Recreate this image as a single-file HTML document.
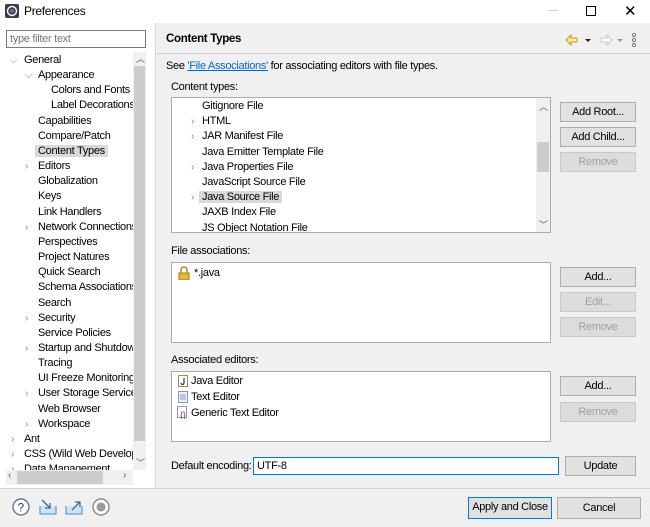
<!DOCTYPE html>
<html><head><style>
*{margin:0;padding:0;box-sizing:border-box}
body{width:650px;height:527px;position:relative;overflow:hidden;background:#f0f0f0;font-family:"Liberation Sans","Noto Sans CJK KR",sans-serif;font-size:11px;color:#000;letter-spacing:-0.3px}
.a{position:absolute;white-space:nowrap}
.box{position:absolute;background:#fff;border:1px solid #adadad}
.btn{position:absolute;background:#e1e1e1;border:1px solid #adadad;text-align:center;line-height:18px;font-size:11px}
.dis{color:#a0a0a0;background:#dcdcdc;border-color:#c8c8c8}
.chev{position:absolute;color:#888;font-size:10px}
</style></head><body>
<div class="a" style="left:0;top:0;width:650px;height:23px;background:#fff"></div>
<svg class="a" style="left:5px;top:4px" width="14" height="14"><rect x="0" y="0" width="14" height="14" rx="2" fill="#3b3b55"/><circle cx="7" cy="7" r="4.5" fill="none" stroke="#fff" stroke-width="1.4"/><circle cx="7" cy="7" r="2" fill="#6a6aa0"/></svg>
<div class="a" style="left:24px;top:4px;font-size:12px">Preferences</div>
<div class="a" style="left:548px;top:10px;width:10px;height:1px;background:#ccc"></div>
<div class="a" style="left:586px;top:6px;width:10px;height:10px;border:1px solid #000"></div>
<div class="a" style="left:624px;top:2px;font-size:15px">✕</div>
<!-- left panel -->
<div class="a" style="left:0;top:23px;width:155px;height:465px;background:#fff"></div>
<div class="a" style="left:155px;top:23px;width:1px;height:465px;background:#d8d8d8"></div>
<div class="a" style="left:6px;top:30px;width:140px;height:18px;border:1px solid #7a7a7a;background:#fff;color:#777;padding:2px 3px;font-size:11px">type filter text</div>
<div class="a" style="left:133px;top:52px;width:13px;height:418px;background:#f0f0f0"></div>
<div class="a" style="left:134px;top:66px;width:11px;height:375px;background:#cdcdcd"></div>
<div class="a" style="left:136px;top:52px;font-size:9px;color:#555">︿</div>
<div class="a" style="left:136px;top:456px;font-size:9px;color:#555">﹀</div>
<div class="a" style="left:6px;top:470px;width:127px;height:15px;background:#f0f0f0"></div>
<div class="a" style="left:17px;top:471px;width:86px;height:13px;background:#cdcdcd"></div>
<div class="a" style="left:8px;top:470px;font-size:10px;color:#555">‹</div>
<div class="a" style="left:123px;top:470px;font-size:10px;color:#555">›</div>
<div class="a" style="left:0;top:53px;width:133px;height:417px;overflow:hidden;line-height:15.15px;font-size:11px">
<div style="padding-left:24px"><span class="chev" style="left:10px">⌵</span>General</div>
<div style="padding-left:38px"><span class="chev" style="left:25px">⌵</span>Appearance</div>
<div style="padding-left:51px">Colors and Fonts</div>
<div style="padding-left:51px">Label Decorations</div>
<div style="padding-left:38px">Capabilities</div>
<div style="padding-left:38px">Compare/Patch</div>
<div style="padding-left:38px"><span style="background:#d9d9d9;padding:0 3px;margin-left:-3px">Content Types</span></div>
<div style="padding-left:38px"><span class="chev" style="left:25px">›</span>Editors</div>
<div style="padding-left:38px">Globalization</div>
<div style="padding-left:38px">Keys</div>
<div style="padding-left:38px">Link Handlers</div>
<div style="padding-left:38px"><span class="chev" style="left:25px">›</span>Network Connections</div>
<div style="padding-left:38px">Perspectives</div>
<div style="padding-left:38px">Project Natures</div>
<div style="padding-left:38px">Quick Search</div>
<div style="padding-left:38px">Schema Associations</div>
<div style="padding-left:38px">Search</div>
<div style="padding-left:38px"><span class="chev" style="left:25px">›</span>Security</div>
<div style="padding-left:38px">Service Policies</div>
<div style="padding-left:38px"><span class="chev" style="left:25px">›</span>Startup and Shutdown</div>
<div style="padding-left:38px">Tracing</div>
<div style="padding-left:38px">UI Freeze Monitoring</div>
<div style="padding-left:38px"><span class="chev" style="left:25px">›</span>User Storage Service</div>
<div style="padding-left:38px">Web Browser</div>
<div style="padding-left:38px"><span class="chev" style="left:25px">›</span>Workspace</div>
<div style="padding-left:24px"><span class="chev" style="left:11px">›</span>Ant</div>
<div style="padding-left:24px"><span class="chev" style="left:11px">›</span>CSS (Wild Web Developer)</div>
<div style="padding-left:24px"><span class="chev" style="left:11px">›</span>Data Management</div>
</div>
<!-- right header -->
<div class="a" style="left:166px;top:33px;font-weight:bold;font-size:11.5px">Content Types</div>
<div class="a" style="left:157px;top:53px;width:493px;height:1px;background:#d0d0d0"></div>
<svg class="a" style="left:565px;top:33px" width="60" height="14"><path d="M1 7 L6 2 V5 H12 V9 H6 V12 Z" fill="#fde9a8" stroke="#c9961f"/><path d="M20 6 h6 l-3 3z" fill="#222"/><path d="M47 7 L42 2 V5 H36 V9 H42 V12 Z" fill="#fafafa" stroke="#c8c8c8"/><path d="M52 6 h6 l-3 3z" fill="#999"/></svg>
<svg class="a" style="left:631px;top:33px" width="6" height="14"><circle cx="3" cy="2" r="1.6" fill="none" stroke="#777"/><circle cx="3" cy="7" r="1.6" fill="none" stroke="#777"/><circle cx="3" cy="12" r="1.6" fill="none" stroke="#777"/></svg>
<div class="a" style="left:166px;top:60px">See <span style="color:#0066cc;text-decoration:underline">'File Associations'</span> for associating editors with file types.</div>
<div class="a" style="left:171px;top:81px">Content types:</div>
<div class="box" style="left:171px;top:97px;width:380px;height:136px;overflow:hidden">
<div class="a" style="left:364px;top:0;width:14px;height:134px;background:#f0f0f0"></div>
<div class="a" style="left:365px;top:44px;width:12px;height:30px;background:#cdcdcd"></div>
<div class="a" style="left:367px;top:2px;font-size:9px;color:#555">︿</div>
<div class="a" style="left:367px;top:120px;font-size:9px;color:#555">﹀</div>
<div class="a" style="left:0;top:1px;line-height:15.2px;width:360px">
<div style="padding-left:30px">Gitignore File</div>
<div style="padding-left:30px"><span class="chev" style="left:19px">›</span>HTML</div>
<div style="padding-left:30px"><span class="chev" style="left:19px">›</span>JAR Manifest File</div>
<div style="padding-left:30px">Java Emitter Template File</div>
<div style="padding-left:30px"><span class="chev" style="left:19px">›</span>Java Properties File</div>
<div style="padding-left:30px">JavaScript Source File</div>
<div style="padding-left:30px"><span class="chev" style="left:19px">›</span><span style="background:#d9d9d9;padding:0 3px;margin-left:-3px">Java Source File</span></div>
<div style="padding-left:30px">JAXB Index File</div>
<div style="padding-left:30px">JS Object Notation File</div>
</div></div>
<div class="btn" style="left:560px;top:102px;width:76px;height:20px">Add Root...</div>
<div class="btn" style="left:560px;top:127px;width:76px;height:20px">Add Child...</div>
<div class="btn dis" style="left:560px;top:152px;width:76px;height:20px">Remove</div>
<div class="a" style="left:171px;top:245px">File associations:</div>
<div class="box" style="left:171px;top:262px;width:380px;height:81px">
<svg class="a" style="left:6px;top:3px" width="12" height="14"><path d="M3 7 V4 a3 3 0 0 1 6 0 V7" fill="none" stroke="#b08a2a" stroke-width="1.5"/><rect x="1" y="7" width="10" height="7" fill="#e8b73a" stroke="#a07a1a"/></svg>
<div class="a" style="left:22px;top:4px">*.java</div></div>
<div class="btn" style="left:560px;top:267px;width:76px;height:20px">Add...</div>
<div class="btn dis" style="left:560px;top:292px;width:76px;height:20px">Edit...</div>
<div class="btn dis" style="left:560px;top:317px;width:76px;height:20px">Remove</div>
<div class="a" style="left:171px;top:354px">Associated editors:</div>
<div class="box" style="left:171px;top:371px;width:380px;height:71px">
<svg class="a" style="left:6px;top:3px" width="10" height="12"><rect x="0.5" y="0.5" width="9" height="11" fill="#fff" stroke="#9a8a5a"/><path d="M6 3 V8 a1.5 1.5 0 0 1 -3 0" fill="none" stroke="#335" stroke-width="1.2"/></svg>
<div class="a" style="left:19px;top:3px">Java Editor</div>
<svg class="a" style="left:6px;top:19px" width="10" height="12"><rect x="0.5" y="0.5" width="9" height="11" fill="#eef" stroke="#8899aa"/><path d="M2 4h6M2 6h6M2 8h6" stroke="#99a"/></svg>
<div class="a" style="left:19px;top:19px">Text Editor</div>
<svg class="a" style="left:5px;top:34px" width="13" height="13"><rect x="0.5" y="0.5" width="9" height="11" fill="#fff" stroke="#999"/><text x="3" y="12" font-size="9" fill="#8a2a8a" font-family="Liberation Sans">{}</text></svg>
<div class="a" style="left:19px;top:35px">Generic Text Editor</div></div>
<div class="btn" style="left:560px;top:376px;width:76px;height:20px">Add...</div>
<div class="btn dis" style="left:560px;top:402px;width:76px;height:20px">Remove</div>
<div class="a" style="left:171px;top:460px">Default encoding:</div>
<div class="a" style="left:253px;top:457px;width:306px;height:18px;background:#fff;border:1px solid #0078d7;padding:2px 3px">UTF-8</div>
<div class="btn" style="left:565px;top:456px;width:71px;height:20px">Update</div>
<!-- bottom -->
<div class="a" style="left:0;top:488px;width:650px;height:1px;background:#d0d0d0"></div>
<svg class="a" style="left:12px;top:497px" width="100" height="20"><circle cx="9" cy="10" r="8" fill="#fff" stroke="#6a7a8a" stroke-width="1.4"/><text x="5.5" y="14.5" font-size="12" fill="#445" font-family="Liberation Sans">?</text>
<path d="M28 9 v8 h16 v-8" fill="#cfe3f3" stroke="#4a8ac0"/><path d="M30 3 l8 8 M38 6 v5 h-5" fill="none" stroke="#3a6a9a" stroke-width="1.3"/>
<path d="M54 9 v8 h16 v-8" fill="#cfe3f3" stroke="#4a8ac0"/><path d="M60 13 l8 -8 M63 5 h5 v5" fill="none" stroke="#3a6a9a" stroke-width="1.3"/>
<circle cx="89" cy="10" r="8" fill="#fff" stroke="#8a8a8a" stroke-width="1.4"/><circle cx="89" cy="10" r="4.5" fill="#999"/></svg>
<div class="btn" style="left:468px;top:497px;width:84px;height:22px;border:1.5px solid #0078d7;line-height:19px">Apply and Close</div>
<div class="btn" style="left:557px;top:497px;width:84px;height:22px;line-height:20px">Cancel</div>
</body></html>
